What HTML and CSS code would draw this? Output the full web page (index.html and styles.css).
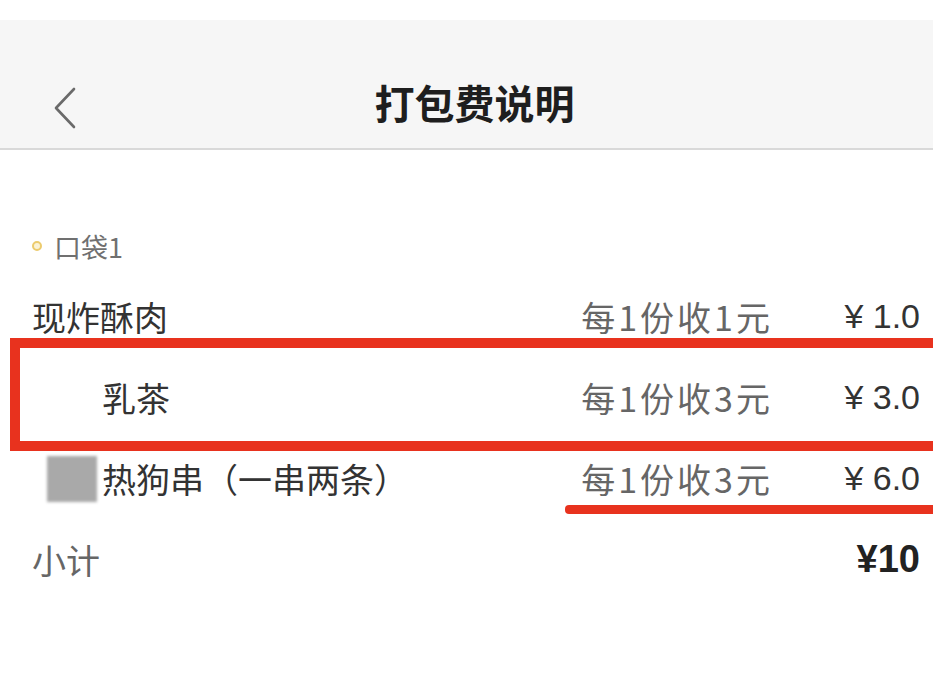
FILE: index.html
```html
<!DOCTYPE html>
<html lang="zh">
<head>
<meta charset="utf-8">
<title>打包费说明</title>
<link rel="stylesheet" href="styles.css">
</head>
<body>
<div class="page">
  <div class="status"></div>
  <header class="nav">
    <div class="nav-left">
      <svg class="back" width="24" height="42" viewBox="0 0 24 42"><polyline points="21,2 3,21 21,40" fill="none" stroke="#6a6a6a" stroke-width="2.6" stroke-linecap="round" stroke-linejoin="round"/></svg>
    </div>
    <h1 class="title">打包费说明</h1>
    <div class="nav-right"></div>
  </header>
  <main class="content">
    <div class="bag"><span class="dot"></span><span class="bag-name">口袋1</span></div>
    <div class="row first">
      <span class="name">现炸酥肉</span>
      <span class="rule">每1份收1元</span>
      <span class="price">¥ 1.0</span>
    </div>
    <div class="row">
      <span class="name indent">乳茶</span>
      <span class="rule">每1份收3元</span>
      <span class="price">¥ 3.0</span>
    </div>
    <div class="row">
      <span class="name"><span class="blur"></span>热狗串（一串两条）</span>
      <span class="rule">每1份收3元</span>
      <span class="price">¥ 6.0</span>
    </div>
    <div class="row subtotal">
      <span class="name">小计</span>
      <span class="total">¥10</span>
    </div>
  </main>
  <div class="mark-box"></div>
  <div class="mark-line"></div>
</div>
</body>
</html>
```

FILE: styles.css
```css
html, body {
  margin: 0;
  padding: 0;
  background: #ffffff;
}
body {
  font-family: "Liberation Sans", "Noto Sans CJK SC", sans-serif;
  color: #333333;
}
.page {
  position: relative;
  width: 933px;
  height: 683px;
  overflow: hidden;
  background: #ffffff;
}
.status {
  height: 20px;
  background: #ffffff;
}
.nav {
  height: 90px;
  padding-top: 38px;
  background: #f6f6f6;
  border-bottom: 2px solid #d9d9d9;
  display: grid;
  grid-template-columns: 1fr auto 1fr;
  align-items: center;
}
.nav-left {
  padding-left: 53px;
  display: flex;
  align-items: center;
  padding-top: 10px;
}
.title {
  margin: -3px 0 0 16px;
  font-family: "Noto Sans CJK SC", sans-serif;
  font-size: 40px;
  font-weight: 700;
  color: #1e1e1e;
  line-height: 1;
}
.content {
  padding: 76px 13px 0 32px;
}
.bag {
  height: 40px;
  display: flex;
  align-items: center;
  gap: 12px;
}
.dot {
  width: 6px;
  height: 6px;
  border-radius: 50%;
  border: 2px solid #eccb6e;
  background: #fbf3d6;
}
.bag-name {
  font-family: "Noto Sans CJK SC", sans-serif;
  font-size: 27px;
  color: #707070;
}
.row {
  height: 81px;
  display: flex;
  align-items: center;
  font-family: "Noto Sans CJK SC", sans-serif;
  font-size: 34px;
}
.row.first {
  margin-top: 10px;
}
.name {
  flex: 1;
  color: #333333;
  display: flex;
  align-items: center;
}
.indent {
  padding-left: 70px;
}
.blur {
  display: inline-block;
  width: 50px;
  height: 46px;
  margin-left: 15px;
  margin-right: 5px;
  background: #a9a9a9;
  filter: blur(1.5px);
}
.rule {
  color: #666666;
  font-size: 34px;
  letter-spacing: 3px;
  margin-right: -3px;
}
.price {
  width: 150px;
  text-align: right;
  color: #333333;
  font-family: "Liberation Sans", "Noto Sans CJK SC", sans-serif;
  font-size: 34px;
}
.subtotal .name {
  color: #666666;
}
.total {
  font-family: "Liberation Sans", sans-serif;
  font-weight: 700;
  font-size: 38px;
  color: #222222;
}
.mark-box {
  position: absolute;
  left: 10px;
  top: 338px;
  width: 940px;
  height: 93px;
  border: 10px solid #e8321e;
}
.mark-line {
  position: absolute;
  left: 565px;
  top: 505px;
  width: 380px;
  height: 9px;
  border-radius: 4px;
  background: #e8321e;
}
```
